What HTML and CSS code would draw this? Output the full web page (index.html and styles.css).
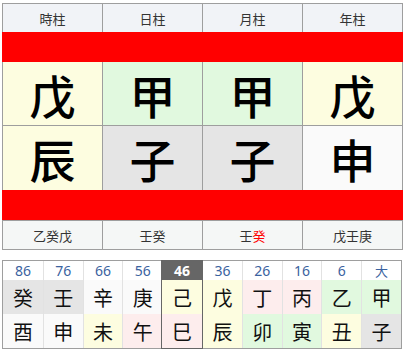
FILE: index.html
```html
<!DOCTYPE html>
<html>
<head>
<meta charset="utf-8">
<link rel="stylesheet" href="styles.css">
</head>
<body>
<div class="chart">
  <div class="row head">
    <div class="cell">時柱</div>
    <div class="cell">日柱</div>
    <div class="cell">月柱</div>
    <div class="cell">年柱</div>
  </div>
  <div class="band"></div>
  <div class="row big stems">
    <div class="cell yellow">戊</div>
    <div class="cell green">甲</div>
    <div class="cell green">甲</div>
    <div class="cell yellow">戊</div>
  </div>
  <div class="row big">
    <div class="cell yellow">辰</div>
    <div class="cell gray">子</div>
    <div class="cell gray">子</div>
    <div class="cell white">申</div>
  </div>
  <div class="band"></div>
  <div class="row foot">
    <div class="cell">乙癸戊</div>
    <div class="cell">壬癸</div>
    <div class="cell">壬<span class="red">癸</span></div>
    <div class="cell">戊壬庚</div>
  </div>
</div>

<div class="luck">
  <div class="col"><div class="age">86</div><div class="gz gray">癸</div><div class="gz white">酉</div></div>
  <div class="col"><div class="age">76</div><div class="gz gray">壬</div><div class="gz white">申</div></div>
  <div class="col"><div class="age">66</div><div class="gz white">辛</div><div class="gz yellow">未</div></div>
  <div class="col"><div class="age">56</div><div class="gz white">庚</div><div class="gz pink">午</div></div>
  <div class="col current"><div class="age">46</div><div class="gz yellow">己</div><div class="gz pink">巳</div></div>
  <div class="col"><div class="age">36</div><div class="gz yellow">戊</div><div class="gz yellow">辰</div></div>
  <div class="col"><div class="age">26</div><div class="gz pink">丁</div><div class="gz green">卯</div></div>
  <div class="col"><div class="age">16</div><div class="gz pink">丙</div><div class="gz green">寅</div></div>
  <div class="col"><div class="age">6</div><div class="gz green">乙</div><div class="gz yellow">丑</div></div>
  <div class="col"><div class="age small">大</div><div class="gz green">甲</div><div class="gz gray">子</div></div>
</div>
</body>
</html>
```

FILE: styles.css
```css
html, body {
  margin: 0;
  padding: 0;
  background: #ffffff;
}

body {
  font-family: "Noto Sans CJK TC", "Noto Sans", sans-serif;
  color: #333;
}

.chart {
  width: 401px;
  margin: 3px 0 0 2px;
}

.row {
  display: grid;
  grid-template-columns: 100px 100px 100px 101px;
}

.cell {
  display: flex;
  align-items: center;
  justify-content: center;
  border-left: 1px solid #9e9e9e;
}

.cell:last-child {
  border-right: 1px solid #9e9e9e;
}

.head .cell {
  height: 28px;
  border-top: 1px solid #9e9e9e;
  background: #f1f3f7;
  font-size: 13px;
}

.band {
  height: 30px;
  background: #ff0000;
}

.big .cell {
  height: 64px;
  font-size: 46px;
  font-weight: 500;
  color: #000;
  line-height: 1;
  box-sizing: border-box;
}

.stems .cell {
  border-bottom: 1px solid #9e9e9e;
}

.foot .cell {
  height: 28px;
  border-top: 1px solid #9e9e9e;
  border-bottom: 1px solid #9e9e9e;
  background: #f5f7f6;
  font-size: 13px;
}

.red {
  color: #ff0000;
}

.yellow { background: #fdfde0; }
.green { background: #e1f9df; }
.gray { background: #e5e5e5; }
.white { background: #fafafa; }
.pink { background: #fdeded; }

.luck {
  display: grid;
  grid-template-columns: repeat(10, 1fr);
  width: 398px;
  margin: 10px 0 0 2px;
  border: 1px solid #9e9e9e;
}

.col {
  display: flex;
  flex-direction: column;
  border-left: 1px solid #e2e2e2;
}

.col:first-child {
  border-left: none;
}

.age {
  height: 19px;
  display: flex;
  align-items: center;
  justify-content: center;
  font-family: "Noto Sans", "Noto Sans CJK TC", sans-serif;
  font-size: 14px;
  color: #3a62a0;
  background: #ffffff;
}

.age.small {
  font-family: "Noto Sans CJK TC", sans-serif;
  font-size: 13px;
}

.gz {
  height: 34px;
  display: flex;
  align-items: center;
  justify-content: center;
  font-size: 20px;
  color: #111;
}

.current {
  outline: 1px solid #666;
  outline-offset: 0;
  border-left: none;
  position: relative;
}

.current .age {
  background: #666;
  color: #fff;
  font-weight: 700;
}
```
